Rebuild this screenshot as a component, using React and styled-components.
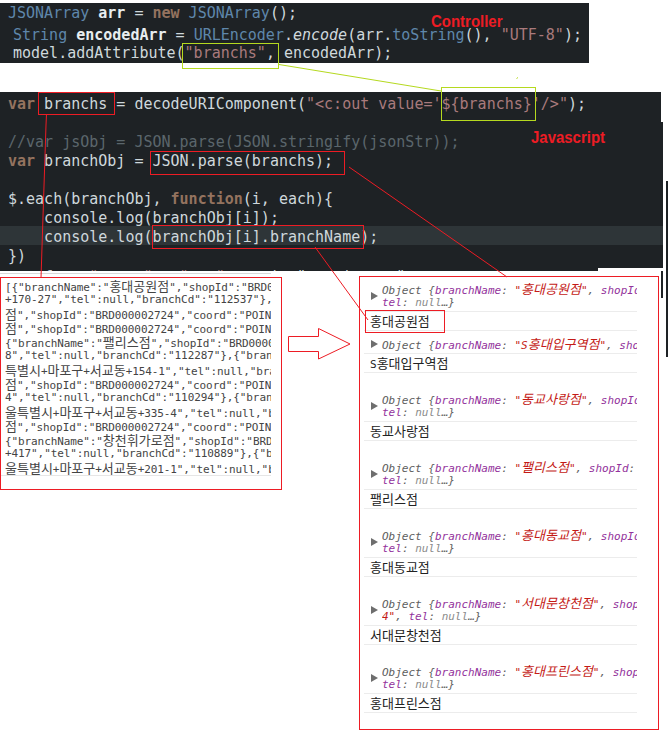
import React from "react";
import styled, { createGlobalStyle } from "styled-components";

const RED = "#ed1c24";
const GREEN = "#b5d91f";
const MONO = '"DejaVu Sans Mono", "Liberation Mono", "Noto Sans CJK KR", monospace';

const Global = createGlobalStyle`
  html, body { margin: 0; padding: 0; background: #fff; }
`;

const Page = styled.div`
  position: relative;
  width: 668px;
  height: 734px;
  overflow: hidden;
  background: #fff;
  font-family: ${MONO};
`;

const TOKEN_COLORS = {
  plain: "#cfd8dc",
  keyword: "#94735f",
  cls: "#5f87ab",
  str: "#a97a7c",
  comment: "#5b666c",
  strong: "#e8edef",
};

const Tok = styled.span`
  color: ${(p) => TOKEN_COLORS[p.$k]};
  font-weight: ${(p) => (p.$k === "keyword" || p.$k === "strong" ? 700 : 400)};
  font-style: ${(p) => (p.$i ? "italic" : "normal")};
`;

const TopPanel = styled.section`
  margin-top: 3px;
  width: 589px;
  height: 60px;
  background: #1e2225;
  font-size: 15px;
  overflow: hidden;
`;

const TopLine = styled.div`
  height: ${(p) => p.$h}px;
  line-height: ${(p) => p.$h}px;
  padding-left: ${(p) => p.$indent}px;
  white-space: pre;
`;

const CodePanel = styled.section`
  margin-top: 29px;
  width: 663px;
  height: 179px;
  box-sizing: border-box;
  padding-top: 1px;
  background: #1e2225;
  font-size: 15px;
  overflow: hidden;
  clip-path: polygon(0 0, 661px 0, 661px 30px, 663px 30px, 663px 176px, 598px 176px, 598px 179px, 0 179px);
`;

const CodeLine = styled.div`
  height: 19px;
  line-height: 22px;
  padding-left: 8px;
  white-space: pre;
  background: ${(p) => (p.$active ? "#2e3538" : "transparent")};
`;

const ClippedLine = styled(CodeLine)`
  line-height: 27px;
`;

const Lower = styled.div`
  display: flex;
  align-items: flex-start;
`;

const LeftColumn = styled.div`
  margin-top: 2px;
  width: 282px;
`;

const Rule = styled.div`
  width: 271px;
  height: 1px;
  margin-bottom: 3px;
  background: #d9d9d9;
`;

const JsonBox = styled.div`
  box-sizing: border-box;
  width: 282px;
  height: 213px;
  border: 1px solid ${RED};
  padding-top: 1px;
`;

const JsonClip = styled.div`
  width: 270px;
  box-sizing: border-box;
  padding-left: 4px;
  border-bottom: 1px solid #e6e6e6;
  overflow: hidden;
  font-size: 11px;
  letter-spacing: -0.1px;
  color: #444;
`;

const JsonLine = styled.div`
  height: 14px;
  line-height: 14px;
  white-space: pre;
  overflow: hidden;
`;

const Hangul = styled.span`
  font-family: "Noto Sans CJK KR", sans-serif;
  font-size: 13px;
  letter-spacing: 0;
`;

const ConsoleBox = styled.div`
  box-sizing: border-box;
  margin-top: 5px;
  margin-left: 77px;
  width: 300px;
  height: 454px;
  border: 1px solid ${RED};
  padding: 5px 21px 0 4px;
  font-size: 11px;
`;

const Entry = styled.div`
  margin-top: ${(p) => p.$gap}px;
`;

const ObjectRow = styled.div`
  display: flex;
  align-items: center;
  padding-left: 7px;
  padding-bottom: ${(p) => p.$pad}px;
`;

const Disclosure = styled.span`
  flex: none;
  width: 0;
  height: 0;
  margin-right: 4px;
  border-left: 7px solid #6e6e6e;
  border-top: 4px solid transparent;
  border-bottom: 4px solid transparent;
`;

const ObjectText = styled.div`
  min-width: 0;
  flex: 1;
  font-style: italic;
  color: #5e5e5e;
`;

const ObjectLine = styled.div`
  height: 14px;
  line-height: 14px;
  white-space: pre;
  overflow: hidden;
`;

const Key = styled.span`
  color: #93339c;
`;
const Str = styled.span`
  color: #c41a16;
`;
const Nil = styled.span`
  color: #8a8a8a;
`;

const LogRow = styled.div`
  box-sizing: border-box;
  height: 20px;
  padding-left: 6px;
  border-top: 1px solid #ececec;
  border-bottom: 1px solid #ececec;
  line-height: 18px;
  font-family: "Noto Sans CJK KR", sans-serif;
  font-size: 13px;
  color: #222;
`;

const LogLatin = styled.span`
  font-family: ${MONO};
  font-size: 11px;
`;

const Callout = styled.div`
  position: absolute;
  box-sizing: border-box;
  left: ${(p) => p.$x}px;
  top: ${(p) => p.$y}px;
  width: ${(p) => p.$w}px;
  height: ${(p) => p.$h}px;
  border: 1px solid ${(p) => p.$color};
`;

const Label = styled.div`
  position: absolute;
  left: ${(p) => p.$x}px;
  top: ${(p) => p.$y}px;
  font-family: "Liberation Sans", Arial, sans-serif;
  font-weight: 700;
  font-size: 17px;
  line-height: 18px;
  color: ${RED};
  transform: scaleX(0.88);
  transform-origin: left center;
`;

const EdgeStrip = styled.div`
  position: absolute;
  left: ${(p) => p.$x}px;
  top: ${(p) => p.$y}px;
  width: ${(p) => p.$w}px;
  height: ${(p) => p.$h}px;
  background: #1e2225;
`;

const Annotations = styled.svg`
  position: absolute;
  inset: 0;
  pointer-events: none;
`;

const withHangul = (text) =>
  text.split(/([\uac00-\ud7a3]+)/).map((part, i) =>
    /[\uac00-\ud7a3]/.test(part) ? <Hangul key={i}>{part}</Hangul> : part
  );

const shop = '점","shopId":"BRD000002724","coord":"POINT(126.9';
const jsonLines = [
  '[{"branchName":"홍대공원점","shopId":"BRD000002724"',
  '+170-27","tel":null,"branchCd":"112537"},{"branch',
  shop,
  shop,
  '{"branchName":"팰리스점","shopId":"BRD000002724"',
  '8","tel":null,"branchCd":"112287"},{"branchName"',
  '특별시+마포구+서교동+154-1","tel":null,"branchCd"',
  shop,
  '4","tel":null,"branchCd":"110294"},{"branchName"',
  '울특별시+마포구+서교동+335-4","tel":null,"branchCd"',
  shop,
  '{"branchName":"창천휘가로점","shopId":"BRD000002724"',
  '+417","tel":null,"branchCd":"110889"},{"branchName"',
  '울특별시+마포구+서교동+201-1","tel":null,"branchCd"',
];

const entries = [
  { name: "홍대공원점", log: "홍대공원점", gap: 0, pad: 1 },
  { name: "S홍대입구역점", log: "홍대입구역점", prefix: "S", gap: 6, pad: 2, single: true },
  { name: "동교사랑점", log: "동교사랑점", gap: 19, pad: 1 },
  { name: "팰리스점", log: "팰리스점", gap: 19, pad: 1 },
  { name: "홍대동교점", log: "홍대동교점", gap: 19, pad: 1 },
  { name: "서대문창천점", log: "서대문창천점", gap: 19, pad: 1, tail: '4"' },
  { name: "홍대프린스점", log: "홍대프린스점", gap: 19, pad: 1 },
];

const lines = [
  [["keyword", "var"], ["plain", " branchs = decodeURIComponent("], ["str", "\"<c:out value='${branchs}'/>\""], ["plain", ");"]],
  [],
  [["comment", "//var jsObj = JSON.parse(JSON.stringify(jsonStr));"]],
  [["keyword", "var"], ["plain", " branchObj = JSON.parse(branchs);"]],
  [],
  [["plain", "$.each(branchObj, "], ["keyword", "function"], ["plain", "(i, each){"]],
  [["plain", "    console.log(branchObj[i]);"]],
  [["plain", "    console.log(branchObj[i].branchName);"]],
  [["plain", "})"]],
];

export default function App() {
  return (
    <Page>
      <Global />
      <TopPanel>
        <TopLine $h={21} $indent={8}>
          <Tok $k="cls">JSONArray </Tok>
          <Tok $k="strong">arr</Tok>
          <Tok $k="plain"> = </Tok>
          <Tok $k="keyword">new</Tok>
          <Tok $k="cls"> JSONArray</Tok>
          <Tok $k="plain">();</Tok>
        </TopLine>
        <TopLine $h={22} $indent={13}>
          <Tok $k="cls">String </Tok>
          <Tok $k="strong">encodedArr</Tok>
          <Tok $k="plain"> = </Tok>
          <Tok $k="cls">URLEncoder</Tok>
          <Tok $k="plain">.</Tok>
          <Tok $k="plain" $i>encode</Tok>
          <Tok $k="plain">(arr.</Tok>
          <Tok $k="cls">toString</Tok>
          <Tok $k="plain">(), </Tok>
          <Tok $k="str">"UTF-8"</Tok>
          <Tok $k="plain">);</Tok>
        </TopLine>
        <TopLine $h={15} $indent={13}>
          <Tok $k="plain">model.addAttribute(</Tok>
          <Tok $k="str">"branchs"</Tok>
          <Tok $k="plain">, encodedArr);</Tok>
        </TopLine>
      </TopPanel>

      <CodePanel>
        {lines.map((line, i) => (
          <CodeLine key={i} $active={i === 7}>
            {line.map(([k, t], j) => (
              <Tok key={j} $k={k}>{t}</Tok>
            ))}
          </CodeLine>
        ))}
        <ClippedLine>
          <Tok $k="plain">    f</Tok>
          <Tok $k="str">    "     "   "   "  </Tok>
          <Tok $k="plain">   i  "    i     "</Tok>
        </ClippedLine>
      </CodePanel>

      <Lower>
        <LeftColumn>
          <Rule />
          <JsonBox>
            <JsonClip>
              {jsonLines.map((l, i) => (
                <JsonLine key={i}>{withHangul(l)}</JsonLine>
              ))}
            </JsonClip>
          </JsonBox>
        </LeftColumn>

        <ConsoleBox>
          {entries.map((e, i) => (
            <Entry key={i} $gap={e.gap}>
              <ObjectRow $pad={e.pad}>
                <Disclosure />
                <ObjectText>
                  <ObjectLine>
                    {"Object {"}
                    <Key>branchName</Key>
                    {": "}
                    <Str>"{withHangul(e.name)}"</Str>
                    {", "}
                    <Key>shopId</Key>
                    {': "BRD000002724"'}
                  </ObjectLine>
                  {!e.single && (
                    <ObjectLine>
                      {e.tail && <><Str>{e.tail}</Str>{", "}</>}
                      <Key>tel</Key>
                      {": "}
                      <Nil>null</Nil>
                      {"…}"}
                    </ObjectLine>
                  )}
                </ObjectText>
              </ObjectRow>
              <LogRow>
                {e.prefix && <LogLatin>{e.prefix}</LogLatin>}
                {e.log}
              </LogRow>
            </Entry>
          ))}
        </ConsoleBox>
      </Lower>

      <EdgeStrip $x={661} $y={271} $w={2} $h={27} />
      <EdgeStrip $x={666} $y={181} $w={2} $h={176} />

      <Annotations width="668" height="734" viewBox="0 0 668 734">
        <g fill="none" stroke={GREEN} strokeWidth="1">
          <path d="M279 64.5 L441 91" />
          <path d="M516.5 78.5 L518 77.5" />
        </g>
        <g fill="none" stroke={RED} strokeWidth="1">
          <path d="M46.5 114 L46 125 L41 278" />
          <path d="M349 167 L507 277" />
          <path d="M315 247 L368 320" />
          <path d="M288.5 336.5 H318.5 V328.5 L350 344 L318.5 359 V351.5 H288.5 Z" fill="#fff" />
        </g>
      </Annotations>

      <Callout $x={182} $y={43} $w={97} $h={26} $color={GREEN} />
      <Callout $x={441} $y={87} $w={95} $h={34} $color={GREEN} />
      <Callout $x={38} $y={92} $w={77} $h={23} $color={RED} />
      <Callout $x={150} $y={151} $w={195} $h={24} $color={RED} />
      <Callout $x={152} $y={225} $w={212} $h={24} $color={RED} />
      <Callout $x={365} $y={310} $w={80} $h={23} $color={RED} />

      <Label $x={431} $y={13}>Controller</Label>
      <Label $x={531} $y={129}>Javascript</Label>
    </Page>
  );
}
